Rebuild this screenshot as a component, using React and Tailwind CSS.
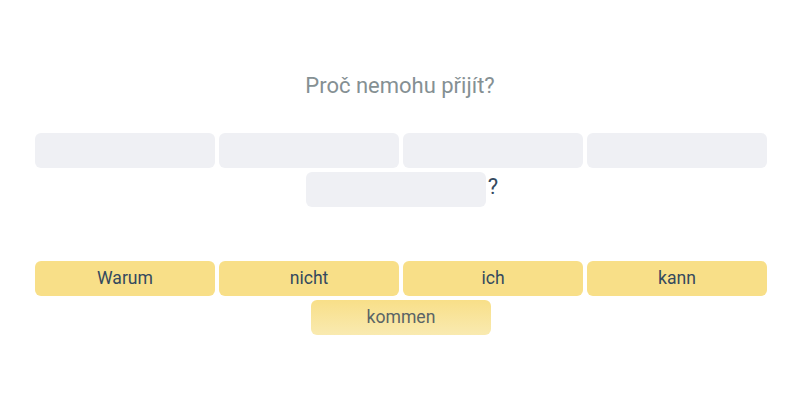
const blanks = [0, 1, 2, 3]
const words = ["Warum", "nicht", "ich", "kann"]

const Slot = () => <div className="h-[35px] w-[180px] rounded-md bg-[#eff0f4]" />

const Word = ({ children }) => (
  <div className="flex h-[35px] w-[180px] items-center justify-center rounded-md bg-[#f8df88] pb-px text-[17.6px] text-[#34495e]">
    {children}
  </div>
)

export default function App() {
  return (
    <div className="flex h-[400px] w-[800px] flex-col items-center bg-white font-['Roboto',sans-serif]">
      <h1 className="mt-[71px] text-[22px] leading-[30px] text-[#859093]">Proč nemohu přijít?</h1>

      <div className="mt-[32px] flex w-full flex-wrap justify-center gap-1 pl-[2px]">
        {blanks.map((i) => (
          <Slot key={i} />
        ))}
        <div className="flex items-center gap-[2px] pl-[2px]">
          <Slot />
          <span className="pb-[6px] text-[22px] leading-none text-[#34495e]">?</span>
        </div>
      </div>

      <div className="mt-[54px] flex w-full flex-wrap justify-center gap-1 pl-[2px]">
        {words.map((w) => (
          <Word key={w}>{w}</Word>
        ))}
        <div className="flex h-[35px] w-[180px] items-center justify-center rounded-md bg-gradient-to-b from-[#f8df88] to-[#f9eab0] pb-px text-[17.6px] text-[#5b6466]">
          kommen
        </div>
      </div>
    </div>
  )
}
